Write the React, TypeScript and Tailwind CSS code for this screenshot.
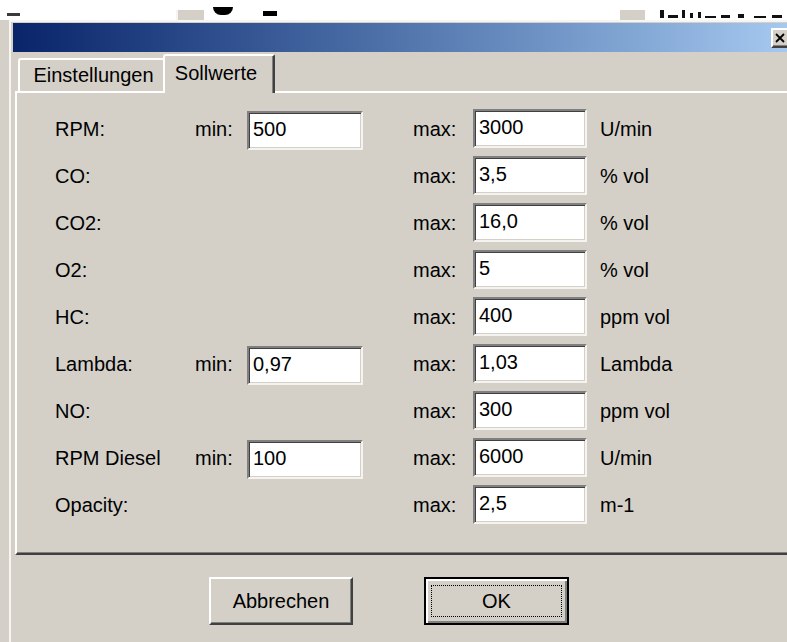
import type { ReactNode } from "react";

type Row = {
  label: string;
  min?: string;
  max: string;
  unit: string;
};

const rows: Row[] = [
  { label: "RPM:", min: "500", max: "3000", unit: "U/min" },
  { label: "CO:", max: "3,5", unit: "% vol" },
  { label: "CO2:", max: "16,0", unit: "% vol" },
  { label: "O2:", max: "5", unit: "% vol" },
  { label: "HC:", max: "400", unit: "ppm vol" },
  { label: "Lambda:", min: "0,97", max: "1,03", unit: "Lambda" },
  { label: "NO:", max: "300", unit: "ppm vol" },
  { label: "RPM Diesel", min: "100", max: "6000", unit: "U/min" },
  { label: "Opacity:", max: "2,5", unit: "m-1" },
];

// Unterkanten der Schrift im Fenster dahinter: [breite, höhe, abstand]
const behind: [number, number, number][] = [
  [4, 8, 0],
  [10, 3, 4],
  [3, 8, 4],
  [3, 5, 5],
  [3, 6, 5],
  [11, 2, 4],
  [9, 3, 5],
  [6, 4, 8],
  [12, 2, 10],
  [10, 3, 6],
];

// versenktes Eingabefeld im klassischen 3D-Look
function Field({ value, className }: { value: string; className: string }) {
  return (
    <div
      className={`flex h-[39px] shrink-0 items-center border-2 border-t-[#808080] border-l-[#808080] border-b-[#f4f3ef] border-r-[#f4f3ef] bg-white pb-[3px] pl-[4px] shadow-[inset_1px_1px_0_#404040,inset_-1px_-1px_0_#d4d0c8] ${className}`}
    >
      {value}
    </div>
  );
}

function Button({ children, focused }: { children: ReactNode; focused?: boolean }) {
  if (focused) {
    return (
      <button
        type="button"
        className="h-[48px] w-[145px] border-2 border-black bg-[#d4d0c8] p-0 shadow-[inset_2px_2px_0_#fff,inset_-2px_-2px_0_#808080]"
      >
        <div className="mx-[5px] flex h-[32px] items-center justify-center border border-dotted border-black pb-[1px]">
          {children}
        </div>
      </button>
    );
  }
  return (
    <button
      type="button"
      className="flex h-[48px] w-[144px] items-center justify-center border-2 border-t-white border-l-white border-b-[#404040] border-r-[#404040] bg-[#d4d0c8] pb-[1px] shadow-[inset_-1px_-1px_0_#808080]"
    >
      {children}
    </button>
  );
}

export default function App() {
  return (
    <div className="h-[642px] w-[787px] overflow-hidden bg-[#d4d0c8] font-['Liberation_Sans',Arial,sans-serif] text-[20px] leading-none text-black">
      {/* Reste des dahinterliegenden Fensters */}
      <div className="flex h-[20px] items-start overflow-hidden bg-white">
        <div className="ml-[7px] mt-[13px] h-[3px] w-[13px] shrink-0 bg-[#3a3a3a]" />
        <div className="ml-[156px] mt-[10px] h-[10px] w-[28px] shrink-0 border-l-2 border-[#f4f4f4] bg-[#d4d0c8]" />
        <div className="ml-[9px] mt-[7px] h-[8px] w-[20px] shrink-0 rounded-b-[10px] bg-black" />
        <div className="ml-[30px] mt-[11px] h-[5px] w-[14px] shrink-0 bg-black" />
        <div className="ml-[343px] mt-[10px] h-[10px] w-[25px] shrink-0 bg-[#d4d0c8]" />
        <div className="ml-[15px] mt-[10px] flex h-[8px] shrink-0 items-end">
          {behind.map(([w, h, gap], i) => (
            <div key={i} className="shrink-0 bg-[#111]" style={{ width: w, height: h, marginLeft: gap }} />
          ))}
        </div>
      </div>

      {/* Dialograhmen: heller Außenrand, dann Fensterfläche */}
      <div className="ml-[9px] w-[784px] bg-[#f6f5f2] pl-[2px] pt-[2px]">
        <div className="bg-[#d4d0c8] pl-[2px] pt-[1px]">
          {/* Titelleiste */}
          <div className="flex h-[29px] items-center bg-linear-to-r from-[#0a246a] to-[#a6caf0]">
            <div className="flex-1" />
            <div className="mr-[2px] flex h-[20px] w-[20px] items-center border-2 border-t-white border-l-white border-b-[#404040] border-r-[#404040] bg-[#d4d0c8] pl-[2px] shadow-[inset_-1px_-1px_0_#808080]">
              <svg width="10" height="10" viewBox="0 0 10 10">
                <path d="M1 1 L9 9 M9 1 L1 9" stroke="#000" strokeWidth="1.8" />
              </svg>
            </div>
          </div>

          {/* Reiter */}
          <div className="mt-[2px] flex items-end pl-[5px]">
            <div className="flex h-[33px] w-[145px] items-center justify-center rounded-tl-[3px] border-l-2 border-t-2 border-white pb-[1px] pl-[4px]">
              Einstellungen
            </div>
            <div className="relative z-10 -mb-[2px] flex h-[39px] w-[112px] items-center justify-center rounded-tl-[3px] rounded-tr-[2px] border-l-2 border-r-2 border-t-2 border-l-white border-t-white border-r-[#404040] bg-[#d4d0c8] pb-[3px] pr-[6px] shadow-[inset_-1px_0_0_#808080]">
              Sollwerte
            </div>
          </div>

          {/* Sollwerte */}
          <div className="ml-[2px] h-[464px] border-b-2 border-l-2 border-t-2 border-b-[#404040] border-l-white border-t-white pl-[38px] pt-[12px] shadow-[inset_0_-1px_0_#808080]">
            {rows.map((r) => (
              <div key={r.label} className="flex h-[47px] items-center">
                <span className="w-[140px] shrink-0">{r.label}</span>
                <span className="w-[52px] shrink-0">{r.min ? "min:" : ""}</span>
                {r.min ? (
                  <Field value={r.min} className="mt-[4px] w-[116px]" />
                ) : (
                  <div className="w-[116px] shrink-0" />
                )}
                <span className="ml-[50px] w-[60px] shrink-0">max:</span>
                <Field value={r.max} className="w-[114px]" />
                <span className="ml-[13px] shrink-0">{r.unit}</span>
              </div>
            ))}
          </div>

          <div className="flex h-[120px] gap-[71px] pl-[196px] pt-[22px]">
            <Button>Abbrechen</Button>
            <Button focused>OK</Button>
          </div>
        </div>
      </div>
    </div>
  );
}
